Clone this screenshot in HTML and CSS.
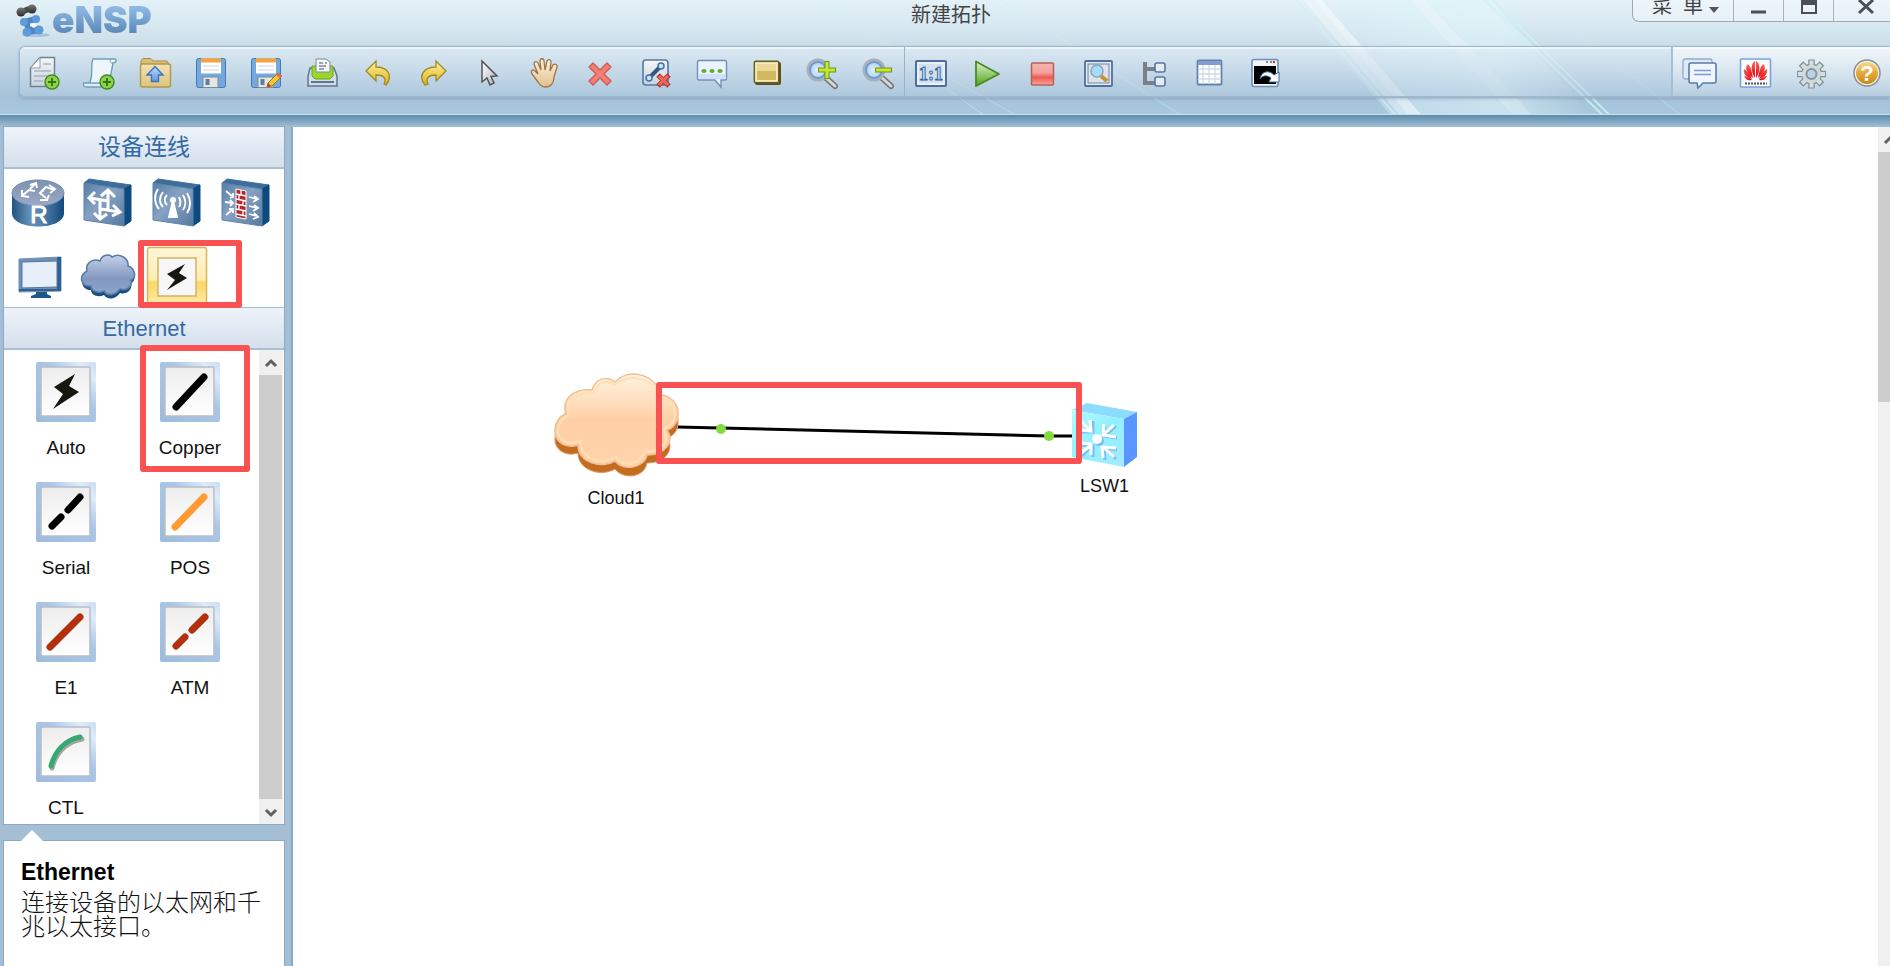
FILE: index.html
```html
<!DOCTYPE html>
<html lang="zh-CN">
<head>
<meta charset="utf-8">
<title>eNSP</title>
<link rel="stylesheet" href="styles.css">
</head>
<body>
<svg class="defs" width="0" height="0" aria-hidden="true">
  <defs>
    <linearGradient id="paper" x1="0" y1="0" x2="0" y2="1"><stop offset="0" stop-color="#f6f7f9"/><stop offset="1" stop-color="#c9d2dc"/></linearGradient>
    <linearGradient id="folder" x1="0" y1="0" x2="0" y2="1"><stop offset="0" stop-color="#f1e3b4"/><stop offset="1" stop-color="#dcc47c"/></linearGradient>
    <linearGradient id="blue" x1="0" y1="0" x2="0" y2="1"><stop offset="0" stop-color="#b9dcfa"/><stop offset="1" stop-color="#5f96dc"/></linearGradient>
    <linearGradient id="gold" x1="0" y1="0" x2="0" y2="1"><stop offset="0" stop-color="#fff2a0"/><stop offset="1" stop-color="#d9b21f"/></linearGradient>
    <linearGradient id="green" x1="0" y1="0" x2="0" y2="1"><stop offset="0" stop-color="#dff2cf"/><stop offset="1" stop-color="#4fa31a"/></linearGradient>
    <linearGradient id="red" x1="0" y1="0" x2="0" y2="1"><stop offset="0" stop-color="#f5b5b0"/><stop offset="0.45" stop-color="#f0a19b"/><stop offset="0.65" stop-color="#ee5b4e"/><stop offset="1" stop-color="#f4a79e"/></linearGradient>
    <linearGradient id="skin" x1="0" y1="0" x2="0" y2="1"><stop offset="0" stop-color="#fff2dc"/><stop offset="1" stop-color="#e3bf8d"/></linearGradient>
    <linearGradient id="metal" x1="0" y1="0" x2="1" y2="1"><stop offset="0" stop-color="#ffffff"/><stop offset="1" stop-color="#a9b2bd"/></linearGradient>
    <radialGradient id="lens"><stop offset="0" stop-color="#e4f1fd"/><stop offset="1" stop-color="#a5c9f0"/></radialGradient>
    <linearGradient id="amber" x1="0" y1="0" x2="0" y2="1"><stop offset="0" stop-color="#f8d98e"/><stop offset="0.5" stop-color="#e2a93a"/><stop offset="1" stop-color="#c98912"/></linearGradient>
    <linearGradient id="petal" x1="0" y1="0" x2="0" y2="1"><stop offset="0" stop-color="#ff6a5a"/><stop offset="1" stop-color="#e00010"/></linearGradient>
    <linearGradient id="face" x1="0" y1="0" x2="1" y2="1"><stop offset="0" stop-color="#587fa8"/><stop offset="0.45" stop-color="#86a2c3"/><stop offset="1" stop-color="#56799f"/></linearGradient>
    <linearGradient id="drum" x1="0" y1="0" x2="1" y2="0"><stop offset="0" stop-color="#1f5583"/><stop offset="0.35" stop-color="#6790b8"/><stop offset="0.6" stop-color="#4f7fab"/><stop offset="1" stop-color="#124a7b"/></linearGradient>
    <linearGradient id="drumtop" x1="0" y1="0" x2="0" y2="1"><stop offset="0" stop-color="#7e92b2"/><stop offset="1" stop-color="#9aa9c6"/></linearGradient>
    <linearGradient id="bluecloud" x1="0" y1="0" x2="0" y2="1"><stop offset="0" stop-color="#c4d0e9"/><stop offset="0.6" stop-color="#8298bf"/><stop offset="1" stop-color="#8fa5cb"/></linearGradient>
    <linearGradient id="peach" x1="0" y1="0" x2="0" y2="1"><stop offset="0" stop-color="#fff3e0"/><stop offset="0.5" stop-color="#ffcfa6"/><stop offset="1" stop-color="#ffd4ac"/></linearGradient>
    <linearGradient id="cyan" x1="0" y1="0" x2="1" y2="1"><stop offset="0" stop-color="#b4fbfd"/><stop offset="0.5" stop-color="#8ff0ff"/><stop offset="1" stop-color="#a8eaff"/></linearGradient>
    <linearGradient id="tileframe" x1="0" y1="1" x2="1" y2="0"><stop offset="0" stop-color="#9dbbdd"/><stop offset="0.6" stop-color="#a9c7e8"/><stop offset="0.85" stop-color="#e0ecf9"/><stop offset="1" stop-color="#c8dcf2"/></linearGradient>
    <linearGradient id="tileface" x1="0" y1="0" x2="0" y2="1"><stop offset="0" stop-color="#ededed"/><stop offset="1" stop-color="#ffffff"/></linearGradient>
    <linearGradient id="hot" x1="0" y1="0" x2="0" y2="1"><stop offset="0" stop-color="#fff6d8"/><stop offset="0.5" stop-color="#fdeeb0"/><stop offset="0.54" stop-color="#fad766"/><stop offset="1" stop-color="#fdf0bd"/></linearGradient>
    <linearGradient id="dark" x1="0" y1="0" x2="0" y2="1"><stop offset="0" stop-color="#7a7a7a"/><stop offset="1" stop-color="#2c2c2c"/></linearGradient>
    <linearGradient id="sheen" x1="0" y1="0" x2="1" y2="0"><stop offset="0" stop-color="#dff6fa" stop-opacity="0"/><stop offset="0.4" stop-color="#dff6fa" stop-opacity="0.45"/><stop offset="0.7" stop-color="#dff6fa" stop-opacity="0.6"/><stop offset="1" stop-color="#dff6fa" stop-opacity="0"/></linearGradient>
    <symbol id="add" viewBox="0 0 16 16"><circle cx="8" cy="8" r="7" fill="#8fd14a" stroke="#3f8a1c" stroke-width="1.4"/><path d="M8 4v8M4 8h8" stroke="#2f7a12" stroke-width="2"/></symbol>
    <symbol id="box" viewBox="0 0 69 60"><path d="M11 10L16 6L58 12L51 16Z" fill="#3d6e9b" stroke="#3d6e9b"/><path d="M51 16L58 12V48L51 53Z" fill="#0d4a80" stroke="#0d4a80"/><path d="M11 10L51 16V53L11 47Z" fill="url(#face)" stroke="#5a82ab"/></symbol>
    <symbol id="tile" viewBox="0 0 60 60"><rect width="60" height="60" rx="2" fill="url(#tileframe)"/><rect x="5" y="5" width="49" height="49" rx="1" fill="url(#tileface)" stroke="#b9bfc6" stroke-width="1.5"/></symbol>
    <symbol id="bolt" viewBox="0 0 60 60"><path d="M39 12L18 25L27 32L17 47L43 30L33 24Z" fill="#16180f"/></symbol>
    <symbol id="floppy" viewBox="0 0 32 32"><rect x="1.5" y="1.5" width="29" height="29" rx="2" fill="#74a9e0" stroke="#4679b4"/><rect x="6" y="1.500" width="20" height="15" fill="#fff"/><rect x="6" y="1.500" width="20" height="4" fill="#f6a33c"/><path d="M8 9h16M8 13h16" stroke="#cfd5dc"/><rect x="8" y="20" width="15" height="10.500" fill="#e6e6e2" stroke="#7d8b99"/><rect x="10.500" y="22" width="4" height="6" fill="#5d7fa6"/></symbol>
  </defs>
</svg>

<header class="header">
  <svg class="streaks" viewBox="0 0 1100 115" preserveAspectRatio="xMaxYMid slice" aria-hidden="true">
    <path d="M500 0H700L800 115H600Z" fill="url(#sheen)"/>
    <path d="M513 0H531L631 115H609Z" fill="#fff" opacity=".3"/>
    <path d="M524 0H531L631 115H618Z" fill="#fff" opacity=".25"/>
    <path d="M620 0H634L742 115H722Z" fill="#fff" opacity=".2"/>
    <g fill="none" stroke="#cdf3f6">
      <path d="M506 0L605 115" stroke-width="2" opacity=".6"/>
      <path d="M30 0L193 115" opacity=".5"/>
      <path d="M210 0L390 115" stroke-width="2" opacity=".25"/>
      <path d="M90 40L225 115" opacity=".4"/>
      <path d="M694 0L812 115M702 0L819 115" stroke-width="2" opacity=".8"/>
      <path d="M770 20L890 115" opacity=".4"/>
    </g>
  </svg>
  <div class="titlebar">
    <div class="brand">
      <svg width="36" height="36" viewBox="0 0 36 36" aria-hidden="true">
        <ellipse cx="20" cy="33" rx="14" ry="2" fill="#8fb0cf" opacity=".6"/>
        <path d="M5 10L16 6" stroke="#4a4a4a" stroke-width="6"/><circle cx="5" cy="10" r="4.500" fill="url(#dark)"/><circle cx="16" cy="7" r="4.500" fill="url(#dark)"/>
        <g stroke="#4a86c4" stroke-width="6" fill="none"><path d="M8 20L20 17M9 20L14 27L12 31M12 30L23 28"/></g>
        <g fill="#5f9bd8"><circle cx="8" cy="20" r="4"/><circle cx="20" cy="17" r="4"/><circle cx="11" cy="30" r="4.500"/><circle cx="23" cy="28" r="4.500"/></g>
        <path d="M14 23h6" stroke="#fff" stroke-width="3"/>
      </svg>
      <span class="brand-name">eNSP</span>
    </div>
    <h1 class="doc-title">新建拓扑</h1>
    <div class="window-controls">
      <button class="menu-button" type="button">菜&nbsp; 单<svg width="10" height="6" viewBox="0 0 10 6" aria-hidden="true"><path d="M0 0h10L5 6Z" fill="#555"/></svg></button>
      <button class="win-button" type="button" aria-label="最小化"><svg width="16" height="16" viewBox="0 0 16 16"><path d="M0 12h15" stroke="#4a4f5a" stroke-width="3"/></svg></button>
      <button class="win-button" type="button" aria-label="最大化"><svg width="16" height="16" viewBox="0 0 16 16"><rect x="1" y="1" width="14" height="12" fill="none" stroke="#4a4f5a" stroke-width="2"/><path d="M1 3h14" stroke="#4a4f5a" stroke-width="4"/></svg></button>
      <button class="win-button win-close" type="button" aria-label="关闭"><svg width="16" height="16" viewBox="0 0 16 16"><path d="M1 0L15 13M15 0L1 13" stroke="#4a4f5a" stroke-width="3"/></svg></button>
    </div>
  </div>

  <div class="toolbar" role="toolbar">
    <div class="tool-group tool-group-edit">
      <button class="tool" type="button" aria-label="新建拓扑"><svg viewBox="0 0 32 32"><path d="M12 .500H26.500V29.500H2.500V11Z" fill="url(#paper)" stroke="#6f8296" stroke-width="1.500"/><path d="M12 .500V11H2.500Z" fill="#fff" stroke="#8c99a8"/><path d="M15 7h8M6 14h17M6 19h14M6 24h9" stroke="#a9b5c2" stroke-width="1.500"/><use href="#add" x="16" y="17" width="16" height="16"/></svg></button>
      <button class="tool" type="button" aria-label="新建试卷工程"><svg viewBox="0 0 32 32"><path d="M9 2H31C33 3 32 6 29 6L25 27H5C10 20 6 8 9 2Z" fill="#eef6fa" stroke="#6fa0b8" stroke-width="1.400"/><path d="M27 2C25 4 27 7 29 6" fill="none" stroke="#6fa0b8"/><path d="M0 26H17V30H2C-1 30-1 27 0 26Z" fill="#dcecf4" stroke="#6fa0b8" stroke-width="1.400"/><use href="#add" x="15" y="17" width="16" height="16"/></svg></button>
      <button class="tool" type="button" aria-label="打开"><svg viewBox="0 0 32 32"><path d="M2 8V4L4 1.500H12L14 4H28L30 7V10H2Z" fill="#d9be74" stroke="#a98d45"/><rect x="1.500" y="7" width="30" height="23" rx="2" fill="url(#folder)" stroke="#b3964c" stroke-width="1.400"/><path d="M16 9.500L24 18H19.500V24.500H12.500V18H8Z" fill="url(#blue)" stroke="#4070c0" stroke-width="1.400"/></svg></button>
      <button class="tool" type="button" aria-label="保存"><svg viewBox="0 0 32 32"><use href="#floppy"/></svg></button>
      <button class="tool" type="button" aria-label="另存为"><svg viewBox="0 0 32 32"><use href="#floppy"/><path d="M28 16L32 19L22 29L17 30L18 26Z" fill="#f7c62e" stroke="#a9761c"/><path d="M28 16L32 19L30 21L26 18Z" fill="#e06b5c"/><path d="M17 30L18 26L21 29Z" fill="#c0392b"/></svg></button>
      <button class="tool" type="button" aria-label="打印"><svg viewBox="0 0 32 32"><path d="M4 11H28L31 19V29H2V19Z" fill="#d3dbe4" stroke="#5b7897" stroke-width="1.500"/><path d="M5 25h23" stroke="#5b7897" stroke-width="2"/><path d="M6 9H27V19L24 22H9L6 19Z" fill="#9bd62a" stroke="#6aa51c"/><path d="M10 2H20L24 5V15H10Z" fill="#f4f6f8" stroke="#7b8a9a"/><path d="M13 6h4M13 9h7M13 12h5M19 6h2" stroke="#7b8a9a" stroke-width="1.500"/></svg></button>
      <button class="tool" type="button" aria-label="撤销"><svg viewBox="0 0 32 32"><path d="M4 14L14 4V10C25 10 32 18 24 28L22 27C25 21 21 18 14 18V24Z" fill="url(#gold)" stroke="#a38a1d" stroke-width="1.300"/></svg></button>
      <button class="tool" type="button" aria-label="重做"><svg viewBox="0 0 32 32"><path d="M29 14L19 4V10C8 10 0 18 8 28L11 27C8 21 12 18 19 18V24Z" fill="url(#gold)" stroke="#a38a1d" stroke-width="1.300"/></svg></button>
      <button class="tool" type="button" aria-label="选择"><svg viewBox="0 0 32 32"><path d="M9 4V25L14 21L17 28L21 26L18 19.500L24 19Z" fill="url(#metal)" stroke="#555" stroke-width="1.500"/></svg></button>
      <button class="tool" type="button" aria-label="移动"><svg viewBox="0 0 32 32"><path d="M10 25L4 17C2 13 5 12 7 14L10 17L6 7C6 4 9 4 10 6L13 13L12 4C12 1 16 1 16 4L17 13L19 4C20 2 23 2 23 5L22 14L25 8C27 6 30 8 29 10L26 20C26 26 23 30 17 30C14 30 12 28 10 25Z" fill="url(#skin)" stroke="#9a7647" stroke-width="1.300"/></svg></button>
      <button class="tool" type="button" aria-label="删除"><svg viewBox="0 0 32 32"><path d="M9 6L16 13L23 6L27 10L20 17L27 24L23 28L16 21L9 28L5 24L12 17L5 10Z" fill="#f27f75" stroke="#cf5a52" stroke-width="1.300" stroke-linejoin="round"/></svg></button>
      <button class="tool" type="button" aria-label="删除所有连线"><svg viewBox="0 0 32 32"><rect x="3" y="3" width="25" height="25" rx="3" fill="url(#paper)" stroke="#5578a4" stroke-width="1.600"/><path d="M9 21L21 9" stroke="#34587f" stroke-width="4"/><circle cx="21" cy="9" r="3" fill="#cfe3f8" stroke="#3f74b4" stroke-width="1.500"/><circle cx="9" cy="21" r="3" fill="#cfe3f8" stroke="#3f74b4" stroke-width="1.500"/><path d="M18 18L29 29M29 18L18 29" stroke="#b03b35" stroke-width="5"/><path d="M19 19L28 28M28 19L19 28" stroke="#f0675c" stroke-width="3"/></svg></button>
      <button class="tool" type="button" aria-label="文本"><svg viewBox="0 0 32 32"><path d="M4 3.500H30C31 3.500 31.500 4 31.500 5V21C31.500 22 31 23 30 23H26V30L20 23H4C3 23 2.500 22 2.500 21V5C2.500 4 3 3.500 4 3.500Z" fill="#edf4ff" stroke="#7290b6" stroke-width="1.400"/><path d="M3 17H31V21L30 22H3Z" fill="#cfe0fb"/><g fill="#5fae22"><ellipse cx="9" cy="14" rx="2.600" ry="2"/><ellipse cx="17" cy="14" rx="2.600" ry="2"/><ellipse cx="25" cy="14" rx="2.600" ry="2"/></g></svg></button>
      <button class="tool" type="button" aria-label="调色板"><svg viewBox="0 0 32 32"><rect x="4" y="5" width="26" height="23" rx="2" fill="#5c4f1d"/><rect x="3.500" y="4.500" width="24" height="21" rx="1" fill="#e9d898" stroke="#6d5e24" stroke-width="1.800"/><rect x="6" y="14" width="19" height="9" fill="#d2b95f"/><rect x="5" y="6" width="21" height="18" fill="none" stroke="#f9f0c4" stroke-width="1.500"/></svg></button>
      <button class="tool" type="button" aria-label="放大"><svg viewBox="0 0 32 32"><path d="M19 20L29 29" stroke="#777" stroke-width="6" stroke-linecap="round"/><path d="M19 20L29 29" stroke="#d7d7d7" stroke-width="3" stroke-linecap="round"/><circle cx="12" cy="13" r="10" fill="url(#lens)" stroke="#a9b1b8" stroke-width="3"/><circle cx="12" cy="13" r="8" fill="none" stroke="#6b9bd2" stroke-width="2"/><path d="M21 4V22M12 13H30" stroke="#6a981c" stroke-width="5"/><path d="M21 5V21M13 13H29" stroke="#c8e829" stroke-width="3"/></svg></button>
      <button class="tool" type="button" aria-label="缩小"><svg viewBox="0 0 32 32"><path d="M19 20L29 29" stroke="#777" stroke-width="6" stroke-linecap="round"/><path d="M19 20L29 29" stroke="#d7d7d7" stroke-width="3" stroke-linecap="round"/><circle cx="12" cy="13" r="10" fill="url(#lens)" stroke="#a9b1b8" stroke-width="3"/><circle cx="12" cy="13" r="8" fill="none" stroke="#6b9bd2" stroke-width="2"/><path d="M13 13H30" stroke="#6a981c" stroke-width="5"/><path d="M14 13H29" stroke="#c8e829" stroke-width="3"/></svg></button>
    </div>
    <div class="tool-group tool-group-run">
      <button class="tool" type="button" aria-label="原始大小"><svg viewBox="0 0 32 32"><rect x="1" y="4" width="30" height="25" rx="1" fill="#d5e0ea" stroke="#4c6f9b" stroke-width="2"/><rect x="3" y="6" width="26" height="21" fill="none" stroke="#fff"/><text x="16" y="23" text-anchor="middle" class="ratio-text">1:1</text></svg></button>
      <button class="tool" type="button" aria-label="开启设备"><svg viewBox="0 0 32 32"><path d="M5 4.500L28 17L5 29Z" fill="url(#green)" stroke="#4a8a24" stroke-width="1.800" stroke-linejoin="round"/></svg></button>
      <button class="tool" type="button" aria-label="停止设备"><svg viewBox="0 0 32 32"><rect x="5.500" y="6" width="22" height="22" rx="1" fill="url(#red)" stroke="#b8605a" stroke-width="1.500"/></svg></button>
      <button class="tool" type="button" aria-label="采集数据报文"><svg viewBox="0 0 32 32"><rect x="3" y="4" width="27" height="25" rx="1" fill="#e4ebf3" stroke="#4f6f9d" stroke-width="1.800"/><rect x="6" y="7" width="21" height="19" fill="#dde2e8" stroke="#6b86ab"/><path d="M19 19L25 24" stroke="#c7932d" stroke-width="4"/><circle cx="15" cy="14" r="6" fill="#a6dcfa" stroke="#8aa5c0" stroke-width="1.500"/></svg></button>
      <button class="tool" type="button" aria-label="设备列表"><svg viewBox="0 0 32 32"><path d="M7 5V26H18M7 12H18" fill="none" stroke="#7a8088" stroke-width="4"/><rect x="17" y="6" width="10" height="9" rx="2" fill="#e4ebf1" stroke="#5678a0" stroke-width="1.600"/><rect x="17" y="20" width="10" height="9" rx="2" fill="#e4ebf1" stroke="#5678a0" stroke-width="1.600"/></svg></button>
      <button class="tool" type="button" aria-label="接口列表"><svg viewBox="0 0 32 32"><rect x="4.500" y="3.500" width="24" height="24" rx="1" fill="#fff" stroke="#6482ae" stroke-width="1.800"/><path d="M5 6H28" stroke="#7e9fcf" stroke-width="4"/><path d="M5 12H28M5 17H28M5 22H28M10 8V27M16 8V27M22 8V27" stroke="#cfdaea" stroke-width="1.300"/></svg></button>
      <button class="tool" type="button" aria-label="打开命令行"><svg viewBox="0 0 32 32"><rect x="3" y="2.500" width="26" height="27" rx="2" fill="#f2f5f8" stroke="#6f8fb5" stroke-width="1.600"/><rect x="5" y="9" width="22" height="18" fill="#000"/><path d="M17 5h2M21 5h2" stroke="#888" stroke-width="2"/><path d="M24 5h2" stroke="#d33" stroke-width="2"/><path d="M11 22C12 15 19 12 25 18L30 15V25H20L22 21C18 18 14 18 11 22Z" fill="#fff" stroke="#3b6ea2"/></svg></button>
    </div>
    <div class="tool-group tool-group-help">
      <button class="tool" type="button" aria-label="论坛"><svg viewBox="0 0 32 32"><rect x="0" y="2" width="29" height="20" rx="2" fill="#dde9f5" stroke="#93acca" stroke-width="1.300"/><path d="M8 6H31C32 6 33 7 33 8V24C33 25 32 26 31 26H20L15 31L14 26H8C7 26 6 25 6 24V8C6 7 7 6 8 6Z" fill="#eef5fd" stroke="#5c7ba8" stroke-width="1.600"/><path d="M11 13.500H28M11 17.500H28" stroke="#7d9cc8" stroke-width="1.600"/></svg></button>
      <button class="tool" type="button" aria-label="华为"><svg viewBox="0 0 32 32"><rect x="1.500" y="2" width="30" height="28" rx="1" fill="#f8fbff" stroke="#7ba3dc" stroke-width="1.600"/><g fill="url(#petal)"><path d="M16 21C11 14 12 6 16 4Z"/><path d="M17 21V4C21 6 22 14 17 21Z"/><path d="M14 21C6 15 6 9 9 7C12 10 13 15 14 21Z"/><path d="M19 21C27 15 27 9 24 7C21 10 20 15 19 21Z"/><path d="M13 22C6 20 4 15 5 12C9 14 11 18 13 22Z"/><path d="M20 22C27 20 29 15 28 12C24 14 22 18 20 22Z"/><path d="M13 23C9 24 6 22 5 19C9 19 11 21 13 23Z"/><path d="M20 23C24 24 27 22 28 19C24 19 22 21 20 23Z"/></g><path d="M6 26.500H28" stroke="#555" stroke-width="2" stroke-dasharray="2 1"/></svg></button>
      <button class="tool" type="button" aria-label="设置"><svg viewBox="0 0 32 32"><g stroke="#84939a" stroke-width="6.500"><path d="M16.500 2.500V31.500M2 17H31M6 6.500L27 27.500M27 6.500L6 27.500"/></g><circle cx="16.500" cy="17" r="10.500" fill="#84939a"/><g stroke="#d5dfe0" stroke-width="4"><path d="M16.500 3.500V30.500M3 17H30M7 7.500L26 26.500M26 7.500L7 26.500"/></g><circle cx="16.500" cy="17" r="9.300" fill="#d0dadb"/><circle cx="16.500" cy="17" r="5" fill="#bfd2e0" stroke="#8496a5" stroke-width="2"/></svg></button>
      <button class="tool" type="button" aria-label="帮助"><svg viewBox="0 0 32 32"><circle cx="16" cy="16" r="13" fill="#f2f2f2" stroke="#8d8d8d" stroke-width="1.500"/><circle cx="16" cy="16" r="11" fill="url(#amber)"/><text x="16" y="24" text-anchor="middle" class="help-text">?</text></svg></button>
    </div>
  </div>
</header>

<main class="workspace">
  <aside class="sidebar">
    <section class="panel">
      <h2 class="panel-title panel-title-cjk">设备连线</h2>
      <div class="device-types">
        <button class="device" type="button" aria-label="路由器"><svg viewBox="0 0 69 60"><path d="M8 20V40C8 58 60 58 60 40V20Z" fill="url(#drum)"/><ellipse cx="34" cy="20" rx="26" ry="13" fill="url(#drumtop)" stroke="#6f8bb0"/><g fill="none" stroke="#fff" stroke-width="2"><path d="M19 22L25 17L31 18M18 17V23L25 24M26 12L32 10L33 15M31 11L26 16"/><path d="M37 19L42 14L50 17M45 12L51 16L46 20M40 17L36 20L42 25M36 27L43 27L45 22"/></g><text x="35" y="50" text-anchor="middle" class="router-text">R</text></svg></button>
        <button class="device" type="button" aria-label="交换机"><svg viewBox="0 0 69 60"><use href="#box"/><g fill="none" stroke="#fff" stroke-width="3"><path d="M17 25L35 28V37L27 36V45M22 19L16 25L22 31M21 40L27 46L34 41M35 30V18M28 23L35 17L42 24M27 36V27M34 37L46 39M40 32L47 39L39 43"/></g></svg></button>
        <button class="device" type="button" aria-label="无线设备"><svg viewBox="0 0 69 60"><use href="#box"/><circle cx="31" cy="27" r="3" fill="#fff"/><path d="M31 28L35 44H27Z" fill="#fff" stroke="#fff" stroke-width="2"/><g fill="none" stroke="#fff" stroke-width="2"><path d="M25 22C22 25 22 29 25 32M21 19C17 24 17 30 21 34M16 16C12 22 12 30 17 36M37 24C39 28 39 31 37 34M41 22C44 27 44 33 41 37M45 20C49 27 49 34 45 40"/></g></svg></button>
        <button class="device" type="button" aria-label="防火墙"><svg viewBox="0 0 69 60"><use href="#box"/><path d="M25 16L35 18V46L25 44Z" fill="#b8242c" stroke="#fff"/><path d="M25 21L35 23M25 26L35 28M25 31L35 33M25 36L35 38M25 41L35 43M30 17V22M28 22V27M32 27V32M28 31V36M32 37V42" stroke="#fff" stroke-width="1.300"/><g fill="none" stroke="#fff" stroke-width="1.800"><path d="M15 18L22 24M19 25L22 24V20M14 29L22 30M19 27L22 30L19 33M15 42L22 36M18 36H22V40M38 24L46 26M43 23L47 26L42 29M38 33L46 35M43 32L47 35L42 38M38 41L46 43M43 40L47 44L42 46"/></g></svg></button>
        <button class="device" type="button" aria-label="终端"><svg viewBox="0 0 69 60"><path d="M32 44H43V47L47 49V51H27V49L32 47Z" fill="#1e5887"/><path d="M15 12L57 10V44L15 45Z" fill="#6f8fb4" stroke="#6f8fb4"/><path d="M53 10H57V44H15V42H53Z" fill="#2f6090"/><path d="M18 15L53 14V40L18 41Z" fill="#e7effa" stroke="#53779f"/></svg></button>
        <button class="device" type="button" aria-label="其他设备"><svg viewBox="0 0 69 60"><path d="M14 27C12 19 20 14 27 17C29 9 37 10 39 13C47 8 56 15 55 22C62 24 64 34 58 36C60 44 52 48 47 46C42 53 34 53 31 48C25 51 18 48 18 43C10 44 5 33 14 27Z" fill="#1d4f7d"/><path d="M14 24C12 16 20 11 27 14C29 7 37 7 39 10C47 5 56 12 55 19C62 21 64 31 58 33C60 41 52 44 47 42C42 49 34 49 31 44C25 47 18 44 18 39C8 40 5 29 14 24Z" fill="url(#bluecloud)" stroke="#547cab" stroke-width="1.500"/></svg></button>
        <button class="device device-selected" type="button" aria-label="设备连线"><svg viewBox="0 0 69 60"><rect x="5.500" y=".500" width="59" height="64" rx="2" fill="url(#hot)" stroke="#d9b45c" stroke-width="1.500"/><rect x="16" y="11" width="38" height="38" fill="#f7f7f7" stroke="#d3b467" stroke-width="1.500"/><path d="M43 17L25 27L33 33L25 43L45 31L37 26Z" fill="#16180f"/></svg></button>
      </div>
      <h2 class="panel-title panel-title-latin">Ethernet</h2>
      <div class="links">
        <div class="link-grid">
          <button class="link-item" type="button"><svg viewBox="0 0 60 60"><use href="#tile"/><use href="#bolt"/></svg>Auto</button>
          <button class="link-item link-copper" type="button"><svg viewBox="0 0 60 60"><use href="#tile"/><path d="M16 45L44 15" class="stroke-black"/></svg>Copper</button>
          <button class="link-item" type="button"><svg viewBox="0 0 60 60"><use href="#tile"/><path d="M16 44L25 35M32 28L44 15" class="stroke-black"/></svg>Serial</button>
          <button class="link-item" type="button"><svg viewBox="0 0 60 60"><use href="#tile"/><path d="M15 45L44 15" class="stroke-orange"/></svg>POS</button>
          <button class="link-item" type="button"><svg viewBox="0 0 60 60"><use href="#tile"/><path d="M14 45L44 15" class="stroke-rust"/></svg>E1</button>
          <button class="link-item" type="button"><svg viewBox="0 0 60 60"><use href="#tile"/><path d="M16 44L25 35M32 28L45 15" class="stroke-rust"/></svg>ATM</button>
          <button class="link-item" type="button"><svg viewBox="0 0 60 60"><use href="#tile"/><path d="M16 46C20 31 30 20 46 17" fill="none" stroke="#6f6f6f" stroke-width="5" stroke-linecap="round" opacity=".6"/><path d="M15 44C19 29 29 18 44 15" class="stroke-green"/></svg>CTL</button>
        </div>
        <div class="scrollbar">
          <svg class="scroll-arrow" viewBox="0 0 24 25"><path d="M7 16L12 11L17 16" /></svg>
          <div class="scroll-thumb"></div>
          <svg class="scroll-arrow" viewBox="0 0 24 25"><path d="M7 11L12 16L17 11" /></svg>
        </div>
      </div>
      <div class="callout callout-type"></div>
      <div class="callout callout-copper"></div>
    </section>
    <section class="info">
      <h3 class="info-title">Ethernet</h3>
      <p class="info-text">连接设备的以太网和千兆以太接口。</p>
    </section>
  </aside>

  <section class="canvas">
    <div class="stage">
      <svg class="wire" width="400" height="20" viewBox="0 0 400 20" aria-hidden="true"><path d="M0 5L372 14H396" fill="none" stroke="#000" stroke-width="3"/><circle cx="44" cy="7" r="5" fill="#82dc3c"/><circle cx="372" cy="14" r="5" fill="#82dc3c"/></svg>
      <figure class="node node-cloud">
        <svg width="130" height="108" viewBox="0 0 130 108" aria-hidden="true">
          <path d="M14 51C9 36 22 25 40 27C44 14 56 13 63 19C75 8 100 8 110 32C120 34 127 42 126 52C126 60 120 66 115 67C123 78 114 92 95 92C92 108 70 108 63 98C50 106 26 100 26 82C14 86 2 79 3 67C3 60 7 53 14 51Z" fill="#c46c20" stroke="#dd9a66"/>
          <path d="M14 43C9 28 22 17 40 19C44 6 56 5 63 11C75 -2 100 0 110 24C120 26 127 34 126 44C126 52 120 58 115 59C123 70 114 84 95 84C92 98 70 100 63 90C50 98 26 92 26 74C14 78 2 71 3 59C3 52 7 45 14 43Z" fill="url(#peach)" stroke="#f0bf95" stroke-width="1.500"/>
          <path d="M17 44C12 30 25 20 42 22C46 9 56 9 63 14C75 3 99 4 108 26C117 28 124 35 123 44C123 51 118 56 111 59C119 69 111 81 92 81C89 94 71 96 64 86C51 95 28 88 29 70C16 75 5 69 6 59C6 52 11 47 17 44Z" fill="none" stroke="#ffe0b4" stroke-width="2"/>
        </svg>
        <figcaption>Cloud1</figcaption>
      </figure>
      <figure class="node node-switch">
        <svg width="70" height="70" viewBox="0 0 70 70" aria-hidden="true">
          <path d="M2 10L17 3L67 12L54 19Z" fill="#8bdcff"/><path d="M54 19L67 12V57L54 67Z" fill="#5a96ff"/><path d="M2 10L54 19V67L2 57Z" fill="url(#cyan)"/>
          <g fill="none" stroke="#7cc0f0" stroke-width="3"><path d="M11 21L22 32M12 32H23V21M46 26L35 36M35 26L34 36L47 38M12 56L22 46M11 45L23 46V57M46 59L35 49M35 60L34 48L47 50"/></g>
          <g fill="none" stroke="#fff" stroke-width="3"><path d="M10 20L20 30M10 30L21 31L20 20M44 25L34 34M34 24L33 35L46 37M10 54L21 45M9 43L21 44V55M44 57L34 48M33 58L32 47L46 48"/></g>
          <ellipse cx="29" cy="41" rx="5" ry="5" fill="#7cc0f0"/><ellipse cx="27" cy="39" rx="5" ry="5" fill="#fff"/>
        </svg>
        <figcaption>LSW1</figcaption>
      </figure>
      <div class="callout callout-wire"></div>
    </div>
    <div class="scrollbar canvas-scrollbar">
      <svg class="scroll-arrow" viewBox="0 0 24 25"><path d="M7 16L12 11L17 16" /></svg>
      <div class="scroll-thumb canvas-thumb"></div>
    </div>
  </section>
</main>
</body>
</html>
```
FILE: styles.css
```css
* {
  box-sizing: border-box;
}

body {
  margin: 0;
  height: 100vh;
  overflow: hidden;
  display: flex;
  flex-direction: column;
  background: #a3bed5;
  color: #111;
  font-family: "Liberation Sans", "Noto Sans CJK SC", sans-serif;
}

button {
  margin: 0;
  padding: 0;
  border: 0;
  background: none;
  color: inherit;
  font: inherit;
}

h1, h2, h3, p, figure {
  margin: 0;
}

svg {
  display: block;
  overflow: visible;
}

.defs {
  position: absolute;
}

/* Header */

.header {
  position: relative;
  flex: none;
  padding-bottom: 16px;
  background: linear-gradient(#e3f2f8 0, #d5e6ef 30px, #c9dce8 48px, #a5c2d9 98px, #a9c8dc 100%);
  border-bottom: 1px solid #cfe0ea;
}

.streaks {
  position: absolute;
  top: 0;
  right: 0;
  width: 1100px;
  height: 100%;
  overflow: hidden;
}

.titlebar {
  position: relative;
  display: grid;
  grid-template-columns: 1fr auto 1fr;
  align-items: start;
  height: 46px;
}

.brand {
  display: flex;
  align-items: center;
  padding-left: 16px;
}

.brand-name {
  font: 900 37px/40px Inter, "Liberation Sans", sans-serif;
  background: linear-gradient(#8db8e4 8px, #5b87b8 34px);
  background-clip: text;
  color: transparent;
}

.doc-title {
  padding-left: 12px;
  font-size: 20px;
  line-height: 30px;
  font-weight: 400;
  color: #444;
}

.window-controls {
  justify-self: end;
  display: flex;
  height: 22px;
  border: solid #a3a9ad;
  border-width: 0 0 1px 1px;
  border-radius: 0 0 0 7px;
  overflow: hidden;
  background: rgba(255, 255, 255, 0.35);
}

.menu-button {
  display: flex;
  align-items: center;
  gap: 6px;
  width: 100px;
  height: 21px;
  padding-left: 19px;
  padding-bottom: 10px;
  font-size: 20px;
  line-height: 20px;
  white-space: nowrap;
  color: #444;
}

.menu-button svg {
  margin-top: 8px;
}

.win-button {
  display: flex;
  justify-content: center;
  width: 50px;
  height: 21px;
  border-left: 1px solid #a9b3bb;
}

.win-close {
  width: 57px;
  padding-left: 8px;
}

/* Toolbar */

.toolbar {
  position: relative;
  display: flex;
  margin-left: 19px;
  height: 52px;
  border: solid #a1b6c8;
  border-width: 1px 0 2px 1px;
  border-radius: 6px 0 0 6px;
  background: linear-gradient(rgba(226, 238, 247, 0.7), rgba(178, 203, 223, 0.5));
  box-shadow: inset 0 2px 0 rgba(255, 255, 255, 0.5), 0 1px 3px rgba(90, 130, 170, 0.4);
}

.tool-group {
  display: flex;
  align-items: center;
  padding-top: 2px;
}

.tool-group-edit {
  width: 885px;
  padding-right: 10px;
  padding-left: 8px;
  justify-content: space-between;
  border-right: 1px solid #9fb1c2;
}

.tool-group-run {
  width: 376px;
  justify-content: space-between;
  padding-left: 10px;
}

.tool-group-help {
  gap: 24px;
  margin-left: auto;
  padding-right: 7px;
  padding-left: 10px;
  border-left: 2px solid #a6bfd4;
  background: linear-gradient(rgba(255, 255, 255, 0.55), rgba(255, 255, 255, 0.1));
}

.tool svg {
  width: 32px;
  height: 32px;
}

.ratio-text {
  font: bold 18px "Liberation Serif", serif;
  fill: #d8eafc;
  stroke: #2f68a8;
  stroke-width: 1px;
}

.help-text {
  font: bold 22px "Liberation Sans", sans-serif;
  fill: #fff;
}

/* Workspace */

.workspace {
  flex: 1;
  display: flex;
  min-height: 0;
  padding-top: 12px;
  background: linear-gradient(#5b8cad 0, #a3bed5 12px);
}

.sidebar {
  flex: none;
  display: flex;
  flex-direction: column;
  width: 291px;
  padding: 0 7px 0 4px;
}

.panel {
  position: relative;
  background: #fff;
  outline: 1px solid #8ca8c6;
}

.panel-title {
  height: 42px;
  border-bottom: 2px solid #a9bfd6;
  background: linear-gradient(#eef3f9, #d4e0ec);
  text-align: center;
  font-weight: 400;
  line-height: 40px;
  color: #356aa5;
}

.panel-title-cjk {
  font-size: 23px;
}

.panel-title-latin {
  height: 43px;
  font-size: 22px;
  line-height: 42px;
  border-top: 1px solid #a9bfd6;
}

.device-types {
  display: grid;
  grid-template-columns: repeat(4, 69px);
  row-gap: 14px;
  height: 138px;
  padding-top: 4px;
  overflow: hidden;
}

.device svg {
  width: 69px;
  height: 60px;
}

.router-text {
  font: 24px "Liberation Sans", sans-serif;
  fill: #fff;
  stroke: #fff;
}

.links {
  display: flex;
  height: 474px;
}

.link-grid {
  flex: 1;
  display: grid;
  grid-template-columns: 124px 124px;
  grid-auto-rows: 120px;
  padding-top: 12px;
}

.link-item {
  display: flex;
  flex-direction: column;
  align-items: center;
  gap: 14px;
  font-size: 19px;
  line-height: 24px;
}

.link-item svg {
  width: 60px;
  height: 60px;
}

.stroke-black,
.stroke-orange,
.stroke-rust,
.stroke-green {
  fill: none;
  stroke: #000;
  stroke-width: 7px;
  stroke-linecap: round;
}

.stroke-orange {
  stroke: #ff9b30;
}

.stroke-rust {
  stroke: #b2310d;
}

.stroke-green {
  stroke: #35a971;
  stroke-width: 5px;
}

.scrollbar {
  display: flex;
  flex-direction: column;
  width: 24px;
  margin-right: 1px;
  background: #f0f0f0;
}

.scroll-arrow {
  width: 24px;
  height: 25px;
  flex: none;
}

.scroll-arrow path {
  fill: none;
  stroke: #606060;
  stroke-width: 3px;
}

.scroll-thumb {
  flex: 1;
  margin-right: 1px;
  background: #cdcdcd;
}

/* Description box with its pointer */

.info {
  position: relative;
  flex: 1;
  margin-top: 17px;
  padding: 17px;
  background: #fff;
  outline: 1px solid #8ca8c6;
}

.info::before {
  content: "";
  position: absolute;
  top: -11px;
  left: 17px;
  border: solid transparent;
  border-width: 0 11px 11px;
  border-bottom-color: #fff;
}

.info-title {
  font-size: 23px;
  line-height: 28px;
  color: #000;
}

.info-text {
  margin-top: 5px;
  font-size: 24px;
  line-height: 24px;
  font-weight: 300;
}

/* Topology canvas */

.canvas {
  flex: 1;
  display: flex;
  min-width: 0;
  overflow: hidden;
  background: #fff;
  border-left: 2px solid #8ca8c6;
}

.stage {
  position: relative;
  flex: 1;
}

.canvas-scrollbar {
  flex: none;
  width: 12px;
  margin-right: 0;
}

.canvas-thumb {
  flex: none;
  height: 250px;
  margin-right: 0;
}

.node {
  position: absolute;
  font-size: 18px;
  line-height: 22px;
}

.node-cloud {
  left: 259px;
  top: 244px;
}

.node-cloud figcaption {
  padding-top: 8px;
  padding-right: 2px;
  text-align: center;
}

.node-switch {
  left: 777px;
  top: 273px;
}

.node-switch figcaption {
  padding-top: 5px;
  padding-left: 10px;
}

.wire {
  position: absolute;
  left: 384px;
  top: 295px;
}

/* Red highlight frames */

.callout {
  position: absolute;
  border: 6px solid #fa5252;
  border-radius: 3px;
}

.callout-type {
  left: 134px;
  top: 113px;
  width: 104px;
  height: 68px;
}

.callout-copper {
  left: 136px;
  top: 218px;
  width: 110px;
  height: 127px;
}

.callout-wire {
  left: 363px;
  top: 255px;
  width: 426px;
  height: 82px;
}
```
